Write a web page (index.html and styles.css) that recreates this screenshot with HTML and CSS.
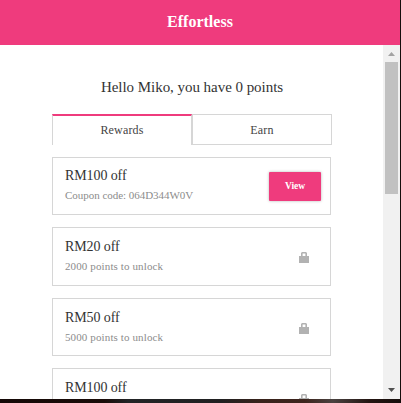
FILE: index.html
```html
<!DOCTYPE html>
<html lang="en">
<head>
  <meta charset="UTF-8" />
  <meta name="viewport" content="width=device-width, initial-scale=1.0"/>
  <title>Effortless</title>
  <link rel="stylesheet" href="styles.css">
</head>
<body>

  <div class="widget">
    <header>
      <h1>Effortless</h1>
    </header>

    <div class="panel">
      <main>
        <p class="greeting">Hello Miko, you have 0 points</p>

        <nav class="tabs">
          <a class="tab active">Rewards</a>
          <a class="tab">Earn</a>
        </nav>

        <section class="card">
          <div>
            <h2>RM100 off</h2>
            <p class="coupon">Coupon code: 064D344W0V</p>
          </div>
          <button>View</button>
        </section>

        <section class="card">
          <div>
            <h2>RM20 off</h2>
            <p>2000 points to unlock</p>
          </div>
          <svg class="lock" viewBox="0 0 10 11"><path d="M0 4h2V1l1-1h4l1 1v3h2v7H0zM3.6 4h2.8V1.6H3.6z"/></svg>
        </section>

        <section class="card">
          <div>
            <h2>RM50 off</h2>
            <p>5000 points to unlock</p>
          </div>
          <svg class="lock" viewBox="0 0 10 11"><path d="M0 4h2V1l1-1h4l1 1v3h2v7H0zM3.6 4h2.8V1.6H3.6z"/></svg>
        </section>

        <section class="card">
          <div>
            <h2>RM100 off</h2>
          </div>
          <svg class="lock" viewBox="0 0 10 11"><path d="M0 4h2V1l1-1h4l1 1v3h2v7H0zM3.6 4h2.8V1.6H3.6z"/></svg>
        </section>
      </main>

      <div class="scrollbar">
        <svg class="arrow" viewBox="0 0 17 17"><path class="up" d="M5 11h7L8.5 7z"/></svg>
        <div class="thumb"></div>
        <svg class="arrow" viewBox="0 0 17 17"><path class="down" d="M5 6h7L8.5 10z"/></svg>
      </div>
    </div>
  </div>

</body>
</html>
```
FILE: styles.css
```css
* {
  margin: 0;
  padding: 0;
  box-sizing: border-box;
}

body {
  height: 403px;
  overflow: hidden;
  font-family: Georgia, "Liberation Serif", serif;
  background: linear-gradient(to right, #140806 0%, #1a0c09 26%, #222426 32%, #202021 55%, #38221b 65%, #3d241d 76%, #4a4240 83%, #241512 92%, #150d0b 100%);
  color: #333;
}

.widget {
  width: 400px;
  height: 399px;
  background: #fff;
}

header {
  height: 45px;
  background: #ef3b7d;
  color: #fff;
  text-align: center;
}

h1 {
  font-size: 16px;
  line-height: 43px;
  font-weight: bold;
}

.panel {
  display: flex;
  height: 354px;
  overflow: hidden;
}

main {
  flex: 1;
  padding: 32px 51px 0 52px;
}

.greeting {
  font-size: 15px;
  line-height: 20px;
  letter-spacing: -0.04px;
  text-align: center;
  white-space: nowrap;
}

.tabs {
  display: flex;
  height: 31px;
  margin: 17px 0 11.6px;
}

.tab {
  flex: 1;
  border: 1px solid #d6d6d6;
  font-size: 12px;
  line-height: 31px;
  letter-spacing: 0.15px;
  text-align: center;
  color: #444;
}

.tab.active {
  border-top: 2px solid #ef3b7d;
  border-bottom: none;
  line-height: 29px;
}

.card {
  display: flex;
  justify-content: space-between;
  align-items: center;
  width: 279px;
  height: 58.6px;
  margin-bottom: 12px;
  padding: 0 9px 0 12px;
  border: 1px solid #d6d6d6;
}

.card > div {
  align-self: flex-start;
  padding-top: 9.8px;
}

h2 {
  font-size: 14px;
  line-height: 18px;
  font-weight: normal;
  letter-spacing: -0.1px;
}

.card p {
  font-size: 11px;
  line-height: 20px;
  letter-spacing: 0.12px;
  color: #8c8c8c;
}

.card .coupon {
  letter-spacing: -0.03px;
}

button {
  width: 52px;
  height: 29px;
  margin-top: 1px;
  border: none;
  border-radius: 1px;
  background: #ef3b7d;
  box-shadow: 0 0 3px rgba(0, 0, 0, 0.3);
  color: #fff;
  font-family: inherit;
  font-size: 9.5px;
  font-weight: bold;
}

.lock {
  width: 10px;
  height: 11px;
  margin: 2.8px 12px 0 0;
  fill: #b2b2b2;
}

.scrollbar {
  display: flex;
  flex-direction: column;
  width: 17px;
  background: #f1f1f1;
}

.arrow {
  width: 17px;
  height: 17px;
}

.up {
  fill: #a3a3a3;
}

.down {
  fill: #505050;
}

.thumb {
  width: 13px;
  height: 132px;
  margin: 0 auto auto;
  background: #c1c1c1;
}
```
